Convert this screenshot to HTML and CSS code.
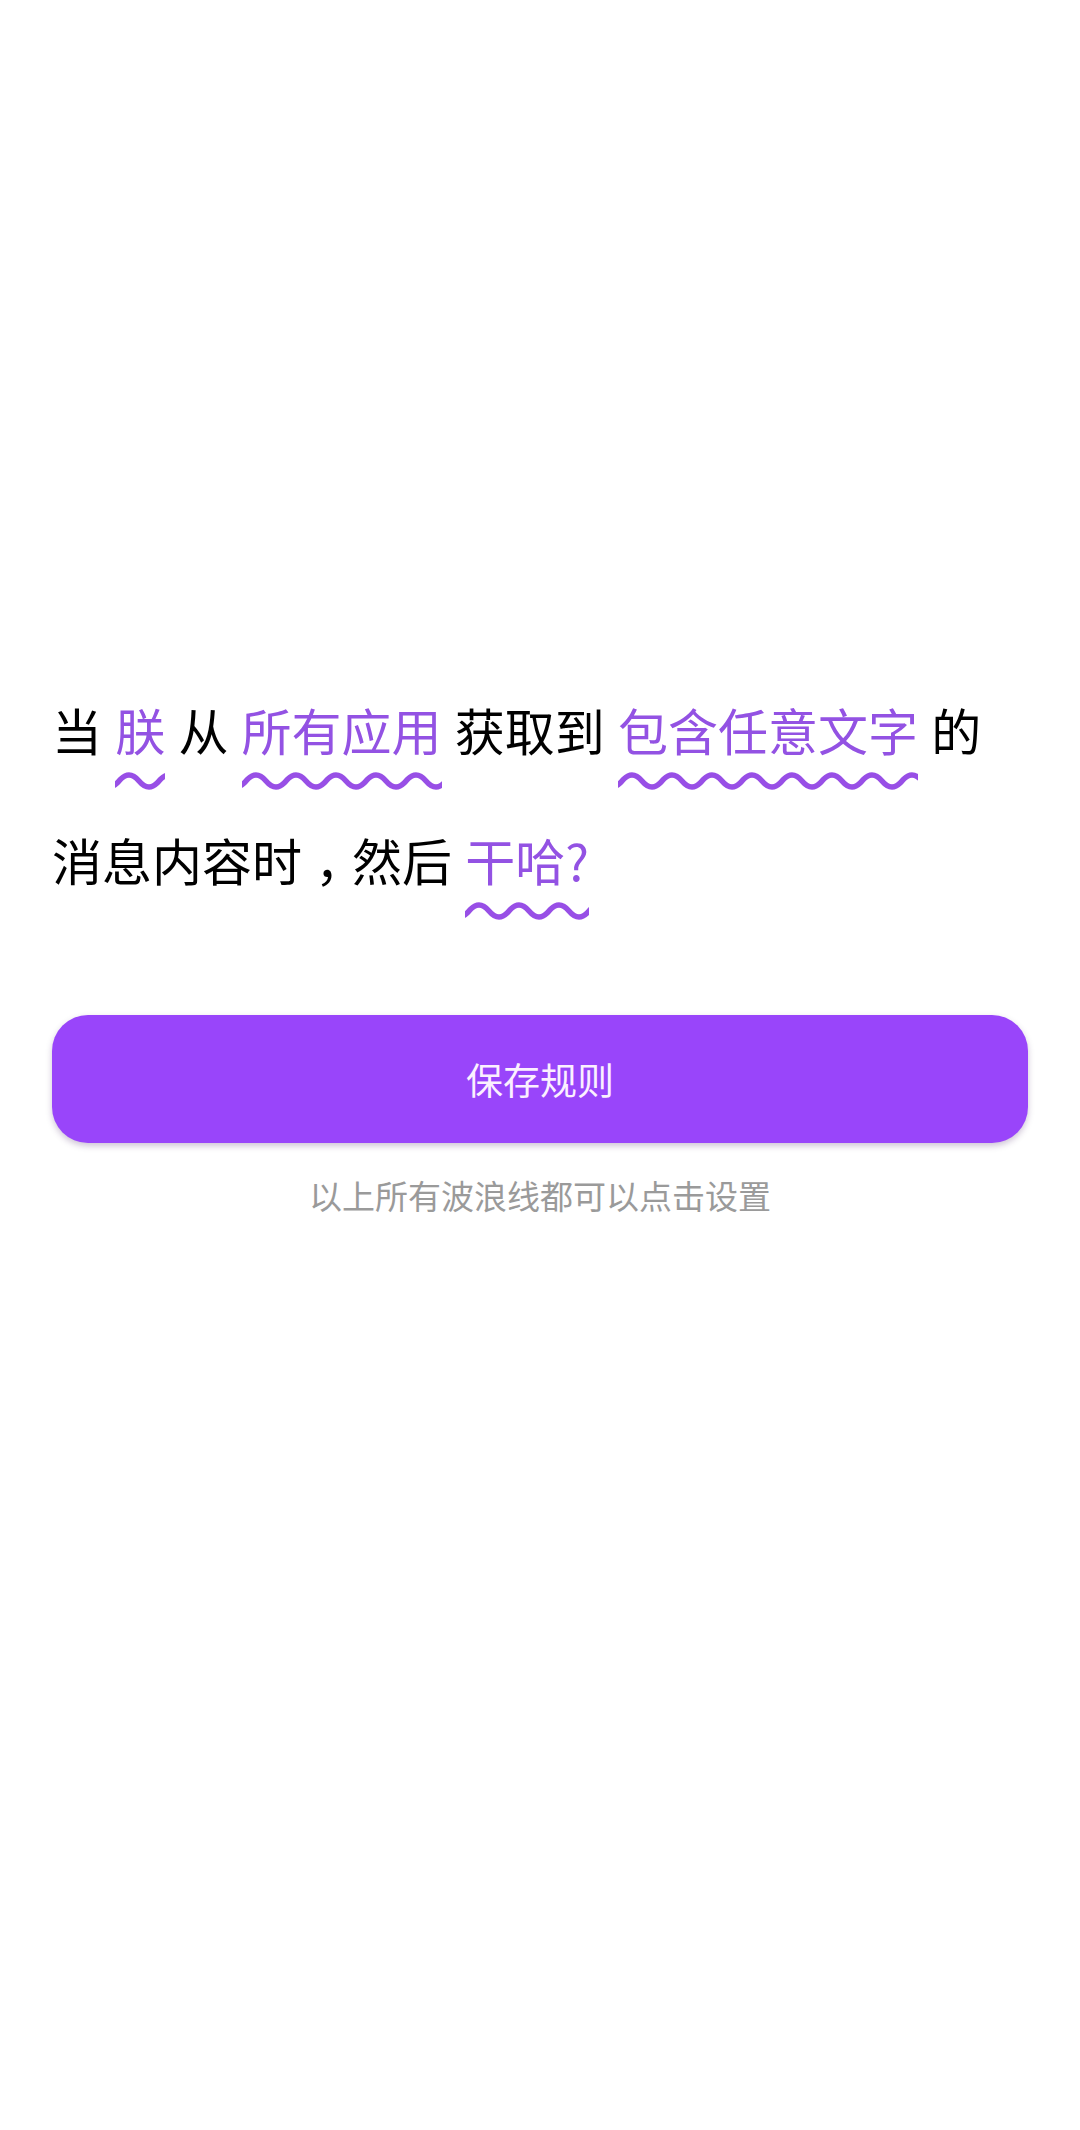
FILE: index.html
```html
<!DOCTYPE html>
<html lang="zh-CN">
<head>
    <meta charset="UTF-8">
    <meta name="viewport" content="width=device-width, initial-scale=1.0">
    <title>规则</title>
    <link rel="stylesheet" href="styles.css">
</head>
<body>
<div id="pagina">
    <p class="regra">当 <span class="onda">朕</span> 从 <span class="onda">所有应用</span> 获取到 <span class="onda">包含任意文字</span> 的消息内容时<span class="virgula">，</span>然后 <span class="onda">干哈?</span></p>
    <button class="salvar">保存规则</button>
    <p class="dica">以上所有波浪线都可以点击设置</p>
</div>
</body>
</html>
```

FILE: styles.css
```css
body {
    margin: 0;
    background-color: white;
    font-family: "Noto Sans CJK SC", "Noto Sans", sans-serif;
}

#pagina {
    padding: 664px 52px 0 52px;
}

.regra {
    margin: 0;
    padding-right: 40px;
    font-size: 50px;
    line-height: 130px;
    word-spacing: 2px;
    color: #000;
}

.onda {
    color: #9352e3;
    padding-bottom: 25px;
    background-image: url("data:image/svg+xml,%3Csvg xmlns='http://www.w3.org/2000/svg' width='40' height='18'%3E%3Cpath d='M-20 9 Q-10 21 0 9 T20 9 T40 9 T60 9' fill='none' stroke='%23984fe6' stroke-width='5.5'/%3E%3C/svg%3E");
    background-repeat: repeat-x;
    background-size: 40px 18px;
    background-position: 4px bottom;
}

/* virgula centrada na celula, como no app */
.virgula {
    padding-left: 13px;
    margin-right: -13px;
}

.salvar {
    display: block;
    width: 100%;
    height: 128px;
    margin-top: 91px;
    border: none;
    border-radius: 36px;
    background-color: #9945fa;
    color: #fbf0ff;
    font-family: "Noto Sans CJK SC", sans-serif;
    font-size: 37px;
    box-shadow: 0 3px 6px rgba(60, 20, 90, 0.25);
}

.dica {
    margin: 28px 0 0 0;
    text-align: center;
    font-size: 33px;
    line-height: 48px;
    color: #9a9a9a;
}
```
